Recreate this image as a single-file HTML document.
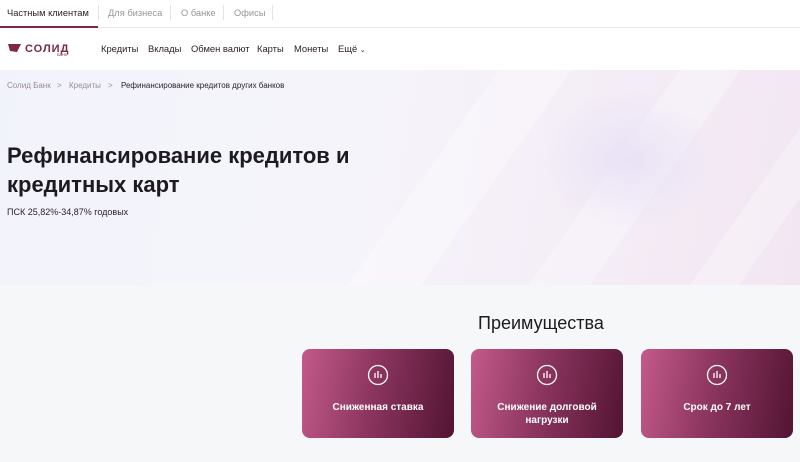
<!DOCTYPE html>
<html><head><meta charset="utf-8"><style>
*{margin:0;padding:0;box-sizing:border-box}
body{width:800px;height:462px;overflow:hidden;font-family:"Liberation Sans",sans-serif;background:#f6f7f9;position:relative}
.top{position:absolute;left:0;top:0;width:800px;height:28px;background:#fff;border-bottom:1px solid #ece6ee;font-size:9.3px}
.top span{position:absolute;top:8px;color:#9a949c}
.top .a{color:#2a1e28;left:7px}
.top .ul{position:absolute;left:0;top:26px;width:98px;height:2px;background:#7c2846}
.sep{position:absolute;top:5px;width:1px;height:15px;background:#e6e2e8}
.nav{position:absolute;top:28px;left:0;width:800px;height:42px;background:#fff;font-size:9.4px;color:#2a1e28}
.nav span{position:absolute;top:15px}
.hero{position:absolute;top:70px;left:0;width:800px;height:215px;background:linear-gradient(100deg,#f1f3fb 0%,#f6f4fb 45%,#f2e6f2 100%);overflow:hidden}
.stripe{position:absolute;background:rgba(255,255,255,.3);transform:rotate(35deg)}
h1{position:absolute;left:7px;top:141px;font-size:22px;line-height:29px;font-weight:bold;color:#1d1a20}
.psk{position:absolute;left:7px;top:207px;font-size:9px;color:#2a1e28}
.bc{position:absolute;top:81px;font-size:8px;color:#9a8a96}
h2{position:absolute;left:478px;top:313px;font-size:18px;font-weight:normal;color:#1d1a20}
.card{position:absolute;top:349px;width:152px;height:89px;border-radius:8px;background:linear-gradient(100deg,#c35a8a 0%,#8d3660 45%,#531432 100%);color:#fff;font-weight:bold;font-size:10px;text-align:center}
.card svg{position:absolute;left:65px;top:15px}
.card p{position:absolute;left:0;right:0;top:52px;line-height:13px}
</style></head><body>
<div class="top"><span class="a">Частным клиентам</span><div class="sep" style="left:98px"></div><span style="left:108px">Для бизнеса</span><div class="sep" style="left:170px"></div><span style="left:181px">О банке</span><div class="sep" style="left:223px"></div><span style="left:234px">Офисы</span><div class="sep" style="left:272px"></div><div class="ul"></div></div>
<div class="nav">
<svg style="position:absolute;left:7px;top:13px" width="80" height="16"><path d="M1 3 L14 3 L10 11 L3 10 Z" fill="#7c2846"/><text x="18" y="11" font-family="Liberation Sans" font-weight="bold" font-size="11" fill="#7c2846" letter-spacing="1">СОЛИД</text><text x="50" y="15" font-size="4" fill="#7c2846">БАНК</text></svg>
<span style="left:101px">Кредиты</span><span style="left:148px">Вклады</span><span style="left:191px">Обмен валют</span><span style="left:257px">Карты</span><span style="left:294px">Монеты</span><span style="left:338px">Ещё <small style="font-size:7px">⌄</small></span></div>
<div class="hero">
<div class="stripe" style="left:400px;top:-150px;width:60px;height:600px"></div>
<div class="stripe" style="left:580px;top:-150px;width:50px;height:600px"></div>
<div class="stripe" style="left:740px;top:-150px;width:40px;height:600px"></div>
<div style="position:absolute;left:540px;top:20px;width:180px;height:140px;border-radius:50%;background:radial-gradient(#e8e2f6,rgba(240,230,245,0) 70%)"></div>
</div>
<div class="bc" style="left:7px">Солид Банк</div><div class="bc" style="left:57px">&gt;</div><div class="bc" style="left:69px">Кредиты</div><div class="bc" style="left:108px">&gt;</div><div class="bc" style="left:121px;color:#2a1e28">Рефинансирование кредитов других банков</div>
<h1>Рефинансирование кредитов и<br>кредитных карт</h1>
<div class="psk">ПСК 25,82%-34,87% годовых</div>
<h2>Преимущества</h2>
<div class="card" style="left:302px"><svg width="22" height="22"><circle cx="11" cy="11" r="9.5" fill="none" stroke="#fff" stroke-width="1.3"/><path d="M8 9v5M11 7v7M14 10v4" stroke="#fff" stroke-width="1.3"/></svg><p>Сниженная ставка</p></div>
<div class="card" style="left:471px"><svg width="22" height="22"><circle cx="11" cy="11" r="9.5" fill="none" stroke="#fff" stroke-width="1.3"/><path d="M8 9v5M11 7v7M14 10v4" stroke="#fff" stroke-width="1.3"/></svg><p>Снижение долговой<br>нагрузки</p></div>
<div class="card" style="left:641px"><svg width="22" height="22"><circle cx="11" cy="11" r="9.5" fill="none" stroke="#fff" stroke-width="1.3"/><path d="M8 9v5M11 7v7M14 10v4" stroke="#fff" stroke-width="1.3"/></svg><p>Срок до 7 лет</p></div>
</body></html>
